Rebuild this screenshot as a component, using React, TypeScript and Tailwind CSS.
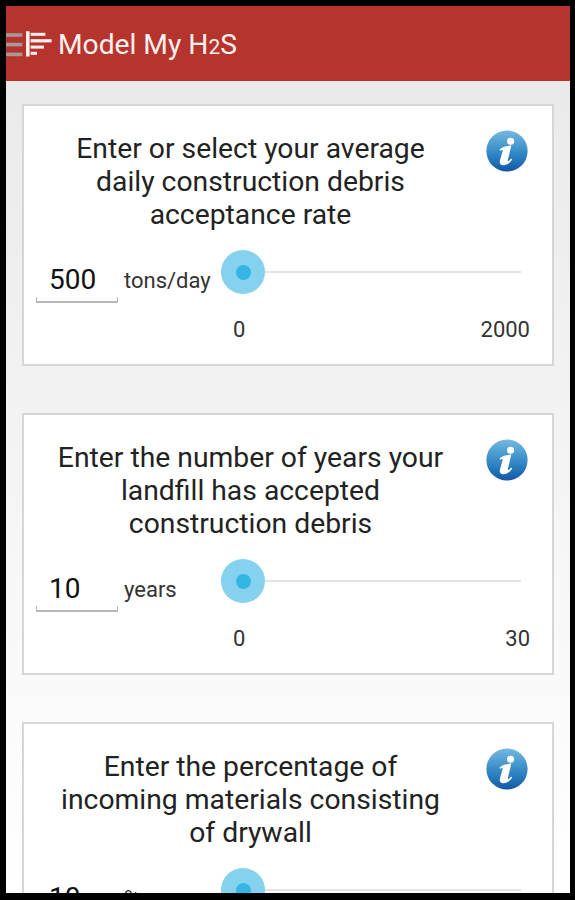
type Question = {
  lines: string[];
  value: string;
  unit: string;
  range?: [string, string];
};

const questions: Question[] = [
  {
    lines: ["Enter or select your average", "daily construction debris", "acceptance rate"],
    value: "500",
    unit: "tons/day",
    range: ["0", "2000"],
  },
  {
    lines: ["Enter the number of years your", "landfill has accepted", "construction debris"],
    value: "10",
    unit: "years",
    range: ["0", "30"],
  },
  {
    lines: ["Enter the percentage of", "incoming materials consisting", "of drywall"],
    value: "10",
    unit: "%",
  },
];

function InfoIcon() {
  return (
    <svg className="h-[42px] w-[42px]" viewBox="0 0 42 42">
      <defs>
        <linearGradient id="ball" x1="0" y1="0" x2="0" y2="1">
          <stop offset="0" stopColor="#76b9df" />
          <stop offset="0.35" stopColor="#4a9bd0" />
          <stop offset="0.7" stopColor="#2679bd" />
          <stop offset="1" stopColor="#1456a3" />
        </linearGradient>
      </defs>
      <circle cx="21" cy="21" r="20.6" fill="url(#ball)" />
      <circle cx="24.6" cy="11.2" r="3.5" fill="#fff" />
      <path
        d="M13.6 19.6C16.2 16.8 20 15.8 25.3 15.6L22 29.4C21.6 31 22 31.3 22.9 30.7C23.7 30.1 24.4 29.4 25 28.5L26.2 29.4C24 33 20.8 35.2 17.2 35.2C14.2 35.2 13.2 33.2 14 30.2L16.7 20.8C17 19.6 16 19.6 14 20.8Z"
        fill="#fff"
      />
    </svg>
  );
}

function QuestionCard({ lines, value, unit, range }: Question) {
  return (
    <section className="h-[262px] w-[532px] shrink-0 border-2 border-[#d6d6d6] bg-white">
      <div className="flex pt-[26px]">
        <h2 className="ml-[11px] w-[431px] text-center text-[28.3px] leading-[33px] text-[#222]">
          {lines.map((line) => (
            <span key={line} className="block whitespace-nowrap">
              {line}
            </span>
          ))}
        </h2>
        <div className="ml-[20px] mt-[-2px]">
          <InfoIcon />
        </div>
      </div>
      <div className="flex pl-[12px]">
        <div className="mt-[30px] flex h-[42px] w-[82px] flex-col">
          <span className="h-[36px] pl-[13px] text-[28px] leading-[38px] text-[#111]">{value}</span>
          <span className="h-[6px] border-x border-b-2 border-[#b8b8b8]" />
        </div>
        <span className="ml-[6px] mt-[34px] w-[97px] text-[22px] leading-[32px] text-[#333]">{unit}</span>
        <div className="w-[309px]">
          <div className="mt-[19px] flex h-[44px] items-center">
            <div className="flex h-[44px] w-[44px] items-center justify-center rounded-full bg-[#84d2ee]">
              <div className="h-[15px] w-[15px] rounded-full bg-[#33b5e5]" />
            </div>
            <div className="h-[2px] w-[256px] bg-[#e3e3e3]" />
          </div>
          {range && (
            <div className="mt-[20px] flex justify-between pl-[12px] text-[22px] leading-[32px] text-[#333]">
              <span>{range[0]}</span>
              <span>{range[1]}</span>
            </div>
          )}
        </div>
      </div>
    </section>
  );
}

export default function App() {
  return (
    <main className="h-[900px] w-[575px] overflow-hidden bg-black pl-[6px] pt-[6px] font-['Roboto',sans-serif]">
      <div className="flex h-[887px] w-[564px] flex-col overflow-hidden bg-gradient-to-b from-[#e8e8e8] to-white">
        <header className="flex h-[75px] shrink-0 items-center bg-[#b6342e]">
          <svg className="h-[30px] w-[47px]" viewBox="0 0 47 30">
            <g fill="#a49a98">
              <rect x="0" y="4.2" width="16.3" height="3.6" />
              <rect x="0" y="13.8" width="16.3" height="3.6" />
              <rect x="0" y="23.6" width="16.3" height="3.6" />
            </g>
            <g fill="#fff0ed">
              <rect x="20" y="2.2" width="3.6" height="25.3" />
              <rect x="24.6" y="3.8" width="14.8" height="3" />
              <rect x="24.6" y="10.2" width="21" height="3.2" />
              <rect x="24.6" y="16.6" width="13.4" height="3" />
              <rect x="24.6" y="22.8" width="6.4" height="3" />
            </g>
          </svg>
          <h1 className="ml-[5px] mt-[5px] text-[28.2px] leading-[36px] text-[#fff0ed]">
            Model My H<span className="text-[21px]">2</span>S
          </h1>
        </header>
        <div className="flex flex-col gap-[47px] pl-[16px] pt-[23px]">
          {questions.map((question) => (
            <QuestionCard key={question.lines[0]} {...question} />
          ))}
        </div>
      </div>
    </main>
  );
}
